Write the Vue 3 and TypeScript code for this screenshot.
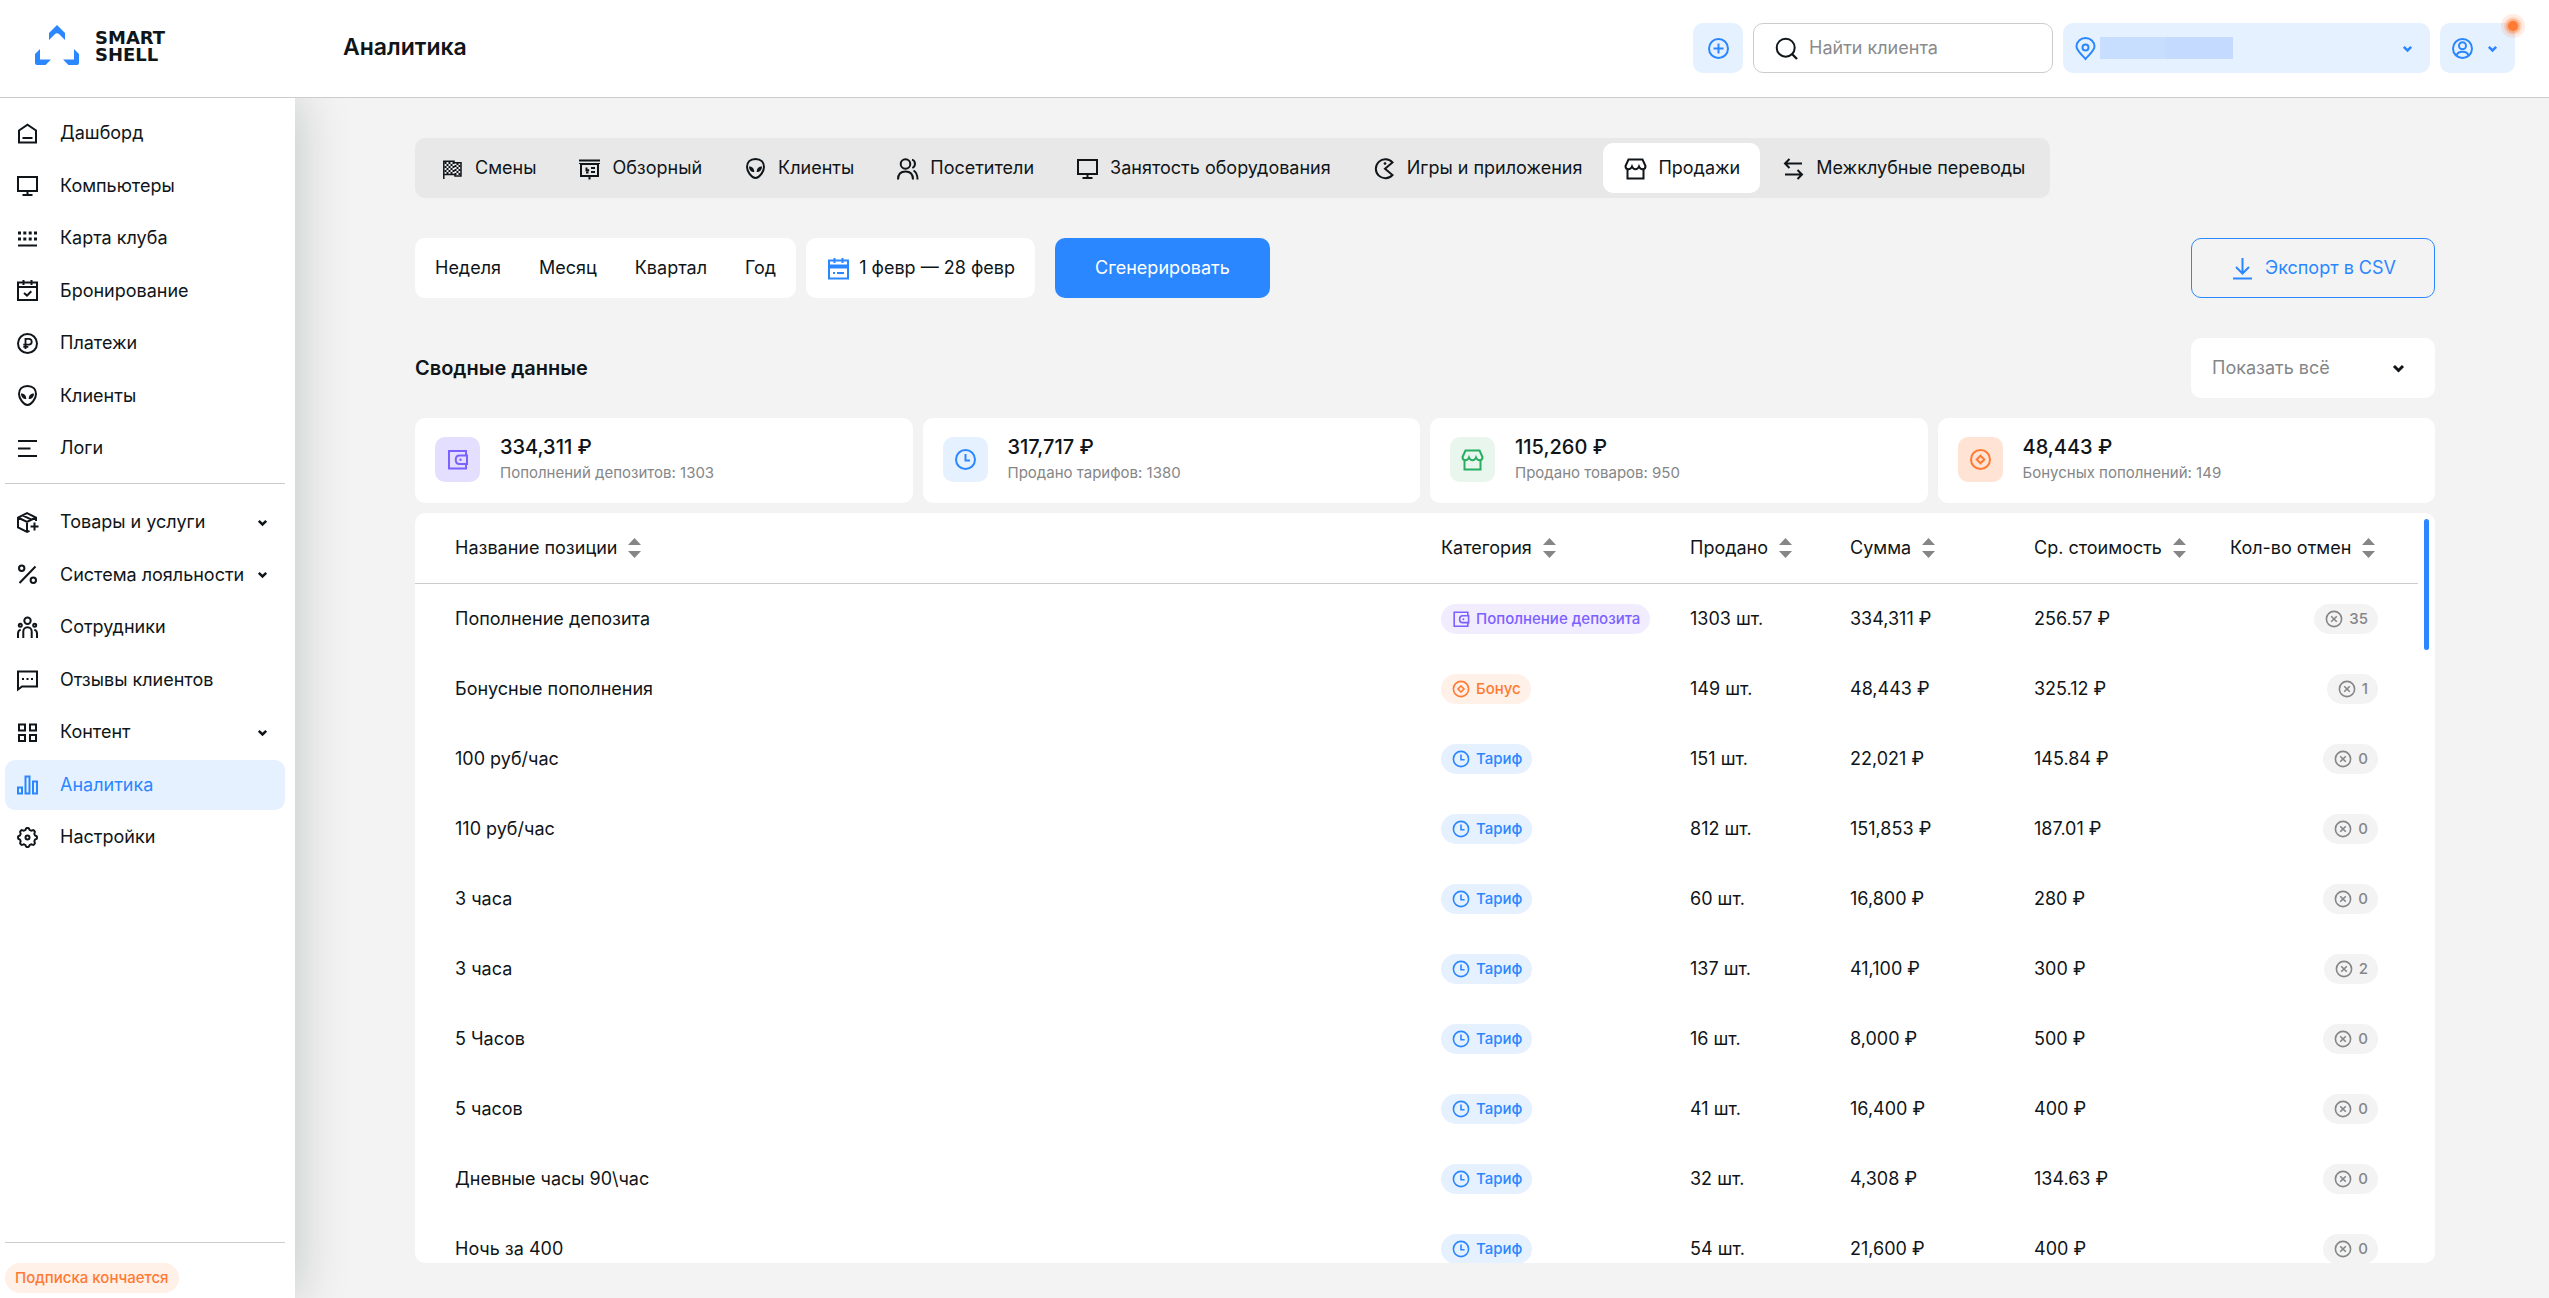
<script setup lang="ts">
import { ref } from 'vue'

type Tone = 'violet' | 'orange' | 'blue' | 'green'

interface NavItem {
  label: string
  icon: string
  expandable?: boolean
  active?: boolean
}

interface SaleRow {
  name: string
  category: string
  sold: string
  sum: string
  average: string
  cancels: number
}

// Outline of the settings gear: eight soft teeth around the centre.
function gearOutline(): string {
  const points: string[] = []
  for (let i = 0; i < 96; i++) {
    const angle = (i / 96) * Math.PI * 2
    const radius = 8.6 + 0.9 * Math.tanh(2 * Math.cos(8 * angle))
    points.push(`${(12.5 + radius * Math.cos(angle)).toFixed(2)} ${(12.5 + radius * Math.sin(angle)).toFixed(2)}`)
  }
  return `M${points.join('L')}Z`
}

// Checkered cells of the race flag.
function flagCells(): string {
  let d = ''
  for (let row = 0; row < 6; row++) {
    for (let col = 0; col < 8; col++) {
      if ((row + col) % 2 === 0) {
        const shift = col > 4 ? 1 : 0
        d += `M${4.5 + col * 2} ${6 + shift + row * 2}h2v2h-2z`
      }
    }
  }
  return d
}

const icons: Record<string, string> = {
  home: '<path d="M4 9.5 12.5 3.7 21 9.5v12H4zM7.5 17h10"/>',
  monitor: '<path d="M3 4h19v14H3zM12.5 18v4M7.5 22h10"/>',
  map: '<path d="M3 19.5h19"/><path fill="currentColor" stroke="none" d="M3 5.5h3v3H3zM8.3 5.5h3v3h-3zM13.7 5.5h3v3h-3zM19 5.5h3v3h-3zM3 11.5h3v3H3zM8.3 11.5h3v3h-3zM13.7 11.5h3v3h-3zM19 11.5h3v3h-3z"/>',
  booking: '<path d="M3 4.5h19v17.5H3zM3 9h19M8.5 2v5M16.500 2v5M9 15l3 2.600 4.300-4.300"/>',
  ruble: '<circle cx="12.500" cy="12.500" r="9.500"/><path stroke-width="1.800" d="M10.500 18V7.800h3.300a2.900 2.900 0 0 1 0 5.800H8.300M8.300 15.800h5"/>',
  alien: '<path d="M12.500 3C7 3 4 6.500 4 11c0 4.500 4.500 11 8.500 11S21 15.500 21 11c0-4.500-3-8-8.500-8z"/><path fill="currentColor" stroke="none" d="M6 10.500c3 0 5.300 1.700 5.300 5.500C8 16 6 14 6 10.500zM19 10.500c-3 0-5.300 1.700-5.300 5.500 3.300 0 5.300-2 5.300-5.500z"/>',
  logs: '<path d="M3 5h19M3 12.500h12.500M3 20h19"/>',
  box: '<path d="M21 11V7.500L12 3 3 7.500v10L12 22l2.500-1.200M3 7.500l9 4.500 9-4.500M12 12v10M7.500 5.300l9 4.400M19.500 12.500v8M15.500 16.500h8"/>',
  percent: '<circle cx="6.700" cy="6.300" r="2.700"/><circle cx="18.300" cy="18.300" r="2.700"/><path d="M4.500 21 20.500 4.500"/>',
  staff: '<circle cx="12.500" cy="5.800" r="3.200"/><circle cx="5.300" cy="10.300" r="1.500"/><circle cx="19.700" cy="10.300" r="1.500"/><path d="M8.300 23v-6.500a4.200 4.200 0 0 1 8.400 0V23M3 23v-4.500c0-2 .8-3.300 2.700-3.900M22 23v-4.500c0-2-.8-3.300-2.700-3.900"/>',
  chat: '<path d="M3 4.500h19v15H7L3 22.500z"/><path stroke-dasharray="2 2.500" d="M7 12h12"/>',
  grid: '<path d="M4 4.500h6v6H4zM15 4.500h6v6h-6zM4 15h6v6H4zM15 15h6v6h-6z"/>',
  chart: '<path d="M3 15.500h4v6H3zM10.500 4.500h4v17h-4zM18 9.500h4v12h-4z"/>',
  gear: `<path d="${gearOutline()}"/><circle cx="12.500" cy="12.500" r="2"/>`,
  flag: `<path stroke-width="1.500" d="M3.800 23V5.300H14v1.500h7V20h-6v-1.500H4"/><path fill="currentColor" stroke="none" d="${flagCells()}"/>`,
  board: '<path d="M2 4.500h21M4 8v12h17V8zM12.500 20v3.500M9.500 11.500v2.700h2.700M14 12h4M14 16h4M9 16.500h2.500"/><path d="M2 7.500h21" stroke-width="1"/>',
  users: '<circle cx="10.500" cy="8" r="4.800"/><path d="M3 23.500c0-5 2.800-8 7.500-8s7.500 3 7.500 8M17 3.600c3.800 1 4 7 .3 8.300M18.500 14.500c2.700 1.500 4 4.500 4 9"/>',
  pacman: '<path d="M20.500 6.500A9.500 9.500 0 1 0 20.500 19L13 12.700z"/><circle cx="13" cy="7.500" r="1" fill="currentColor" stroke-width=".8"/>',
  store: '<path d="M5.500 3.500h14l3 6.500c0 2-1.300 3.300-3 3.300s-2.800-1-3.500-2.800c-.7 1.800-2 2.800-3.500 2.800S9.700 12.300 9 10.500c-.7 1.800-1.800 2.800-3.500 2.800s-3-1.300-3-3.300zM4.500 13.500v9h16v-9M3.500 22.500h18"/>',
  swap: '<path d="M21 7.500H4.500M8.500 3 4 7.500 8.500 12M4 18.500h16.500M16.500 14l4.500 4.500-4.500 4.500"/>',
  calendar: '<path d="M3 4.500h19v18H3zM3 9.500h19M3 11.500h19M8.500 2v5M16.500 2v5M7 17h2M11 17h7"/>',
  download: '<path d="M12.500 2v15M6 11l6.500 6.500L19 11M3 22.500h19"/>',
  wallet: '<path d="M21 8V4H4v17.500h17V18M22 8.500h-7.500c-5 0-5 8.500 0 8.500H22z"/><circle cx="15.500" cy="12.800" r="1.200" fill="currentColor" stroke="none"/>',
  clock: '<circle cx="12.500" cy="12.500" r="9.500"/><path d="M12.500 7v6.500H17"/>',
  coin: '<circle cx="12.500" cy="12.500" r="9.500"/><path d="m12.500 8.700 3.800 3.800-3.800 3.800-3.800-3.800z"/>',
  cancel: '<circle cx="12.500" cy="12.500" r="9.500"/><path d="m9 9 7 7M16 9l-7 7"/>',
  plus: '<circle cx="12.500" cy="12.500" r="9.500"/><path d="M12.500 7.500v10M7.500 12.500h10"/>',
  search: '<circle cx="11.700" cy="11.700" r="9"/><path stroke-width="2.300" d="m18 18 5 5"/>',
  pin: '<path d="M12.500 23C7 17 3.500 14 3.500 10.500a9 8.500 0 0 1 18 0C21.500 14 18 17 12.500 23z"/><circle cx="12.500" cy="11.500" r="3"/>',
  profile: '<circle cx="12.500" cy="12.500" r="9.500"/><circle cx="12.500" cy="9.700" r="3.500"/><path d="M6.500 19.500c1.500-5 10.500-5 12 0"/>',
  chevron: '<path stroke-width="2.500" d="m8.800 10.800 3.700 3.700 3.700-3.700"/>',
  chevronBold: '<path stroke-width="3" d="m8 10 4.500 4.500L17 10"/>',
}

const primaryNav: NavItem[] = [
  { label: 'Дашборд', icon: 'home' },
  { label: 'Компьютеры', icon: 'monitor' },
  { label: 'Карта клуба', icon: 'map' },
  { label: 'Бронирование', icon: 'booking' },
  { label: 'Платежи', icon: 'ruble' },
  { label: 'Клиенты', icon: 'alien' },
  { label: 'Логи', icon: 'logs' },
]

const secondaryNav: NavItem[] = [
  { label: 'Товары и услуги', icon: 'box', expandable: true },
  { label: 'Система лояльности', icon: 'percent', expandable: true },
  { label: 'Сотрудники', icon: 'staff' },
  { label: 'Отзывы клиентов', icon: 'chat' },
  { label: 'Контент', icon: 'grid', expandable: true },
  { label: 'Аналитика', icon: 'chart', active: true },
  { label: 'Настройки', icon: 'gear' },
]

const tabs = [
  { label: 'Смены', icon: 'flag' },
  { label: 'Обзорный', icon: 'board' },
  { label: 'Клиенты', icon: 'alien' },
  { label: 'Посетители', icon: 'users' },
  { label: 'Занятость оборудования', icon: 'monitor' },
  { label: 'Игры и приложения', icon: 'pacman' },
  { label: 'Продажи', icon: 'store' },
  { label: 'Межклубные переводы', icon: 'swap' },
]
const activeTab = ref('Продажи')

const periods = ['Неделя', 'Месяц', 'Квартал', 'Год']

const cards: { value: string; note: string; icon: string; tone: Tone }[] = [
  { value: '334,311 ₽', note: 'Пополнений депозитов: 1303', icon: 'wallet', tone: 'violet' },
  { value: '317,717 ₽', note: 'Продано тарифов: 1380', icon: 'clock', tone: 'blue' },
  { value: '115,260 ₽', note: 'Продано товаров: 950', icon: 'store', tone: 'green' },
  { value: '48,443 ₽', note: 'Бонусных пополнений: 149', icon: 'coin', tone: 'orange' },
]

const categories: Record<string, { icon: string; tone: Tone }> = {
  'Пополнение депозита': { icon: 'wallet', tone: 'violet' },
  'Бонус': { icon: 'coin', tone: 'orange' },
  'Тариф': { icon: 'clock', tone: 'blue' },
}

const columns = [
  { label: 'Название позиции', key: 'name' },
  { label: 'Категория', key: 'category' },
  { label: 'Продано', key: 'sold' },
  { label: 'Сумма', key: 'sum' },
  { label: 'Ср. стоимость', key: 'average' },
  { label: 'Кол-во отмен', key: 'cancels' },
]

const rows: SaleRow[] = [
  { name: 'Пополнение депозита', category: 'Пополнение депозита', sold: '1303 шт.', sum: '334,311 ₽', average: '256.57 ₽', cancels: 35 },
  { name: 'Бонусные пополнения', category: 'Бонус', sold: '149 шт.', sum: '48,443 ₽', average: '325.12 ₽', cancels: 1 },
  { name: '100 руб/час', category: 'Тариф', sold: '151 шт.', sum: '22,021 ₽', average: '145.84 ₽', cancels: 0 },
  { name: '110 руб/час', category: 'Тариф', sold: '812 шт.', sum: '151,853 ₽', average: '187.01 ₽', cancels: 0 },
  { name: '3 часа', category: 'Тариф', sold: '60 шт.', sum: '16,800 ₽', average: '280 ₽', cancels: 0 },
  { name: '3 часа', category: 'Тариф', sold: '137 шт.', sum: '41,100 ₽', average: '300 ₽', cancels: 2 },
  { name: '5 Часов', category: 'Тариф', sold: '16 шт.', sum: '8,000 ₽', average: '500 ₽', cancels: 0 },
  { name: '5 часов', category: 'Тариф', sold: '41 шт.', sum: '16,400 ₽', average: '400 ₽', cancels: 0 },
  { name: 'Дневные часы 90\\час', category: 'Тариф', sold: '32 шт.', sum: '4,308 ₽', average: '134.63 ₽', cancels: 0 },
  { name: 'Ночь за 400', category: 'Тариф', sold: '54 шт.', sum: '21,600 ₽', average: '400 ₽', cancels: 0 },
]
</script>

<template>
  <div class="app">
    <header class="header">
      <a class="logo" href="#" aria-label="Smart Shell">
        <svg class="logo-mark" viewBox="0 0 44 40" aria-hidden="true">
          <path d="M14 8 22 0l8 8v7l-6-6q-2-1.500-4 0l-6 6zM5 24v10.500h11L10.500 40H2q-2 0-2-2v-9zM39 24v10.500H28l5.500 5.500H42q2 0 2-2v-9z" />
        </svg>
        <span class="logo-text"><span>SMART</span><span>SHELL</span></span>
      </a>
      <h1 class="title">Аналитика</h1>
      <div class="tools">
        <button class="tool" type="button" aria-label="Добавить"><svg class="icon" viewBox="0 0 25 25" v-html="icons.plus" /></button>
        <label class="search">
          <svg class="icon" viewBox="0 0 25 25" v-html="icons.search" />
          <input type="search" placeholder="Найти клиента" aria-label="Найти клиента" />
        </label>
        <button class="tool club" type="button" aria-haspopup="listbox" aria-label="Клуб">
          <svg class="icon" viewBox="0 0 25 25" v-html="icons.pin" />
          <span class="club-name" />
          <svg class="icon" viewBox="0 0 25 25" v-html="icons.chevron" />
        </button>
        <button class="tool profile" type="button" aria-haspopup="menu" aria-label="Профиль">
          <svg class="icon" viewBox="0 0 25 25" v-html="icons.profile" />
          <svg class="icon" viewBox="0 0 25 25" v-html="icons.chevron" />
          <span class="dot" />
        </button>
      </div>
    </header>

    <div class="body">
      <aside class="sidebar">
        <nav>
          <template v-for="(group, index) in [primaryNav, secondaryNav]" :key="index">
            <hr v-if="index" />
            <ul>
              <li v-for="item in group" :key="item.label">
                <a href="#" class="nav-link" :class="{ active: item.active }">
                  <svg class="icon" viewBox="0 0 25 25" v-html="icons[item.icon]" />
                  <span class="nav-label">{{ item.label }}</span>
                  <svg v-if="item.expandable" class="icon" viewBox="0 0 25 25" v-html="icons.chevron" />
                </a>
              </li>
            </ul>
          </template>
        </nav>
        <div class="sidebar-foot">
          <a href="#" class="pill orange">Подписка кончается</a>
        </div>
      </aside>

      <main class="main">
        <div class="tabs" role="tablist">
          <button
            v-for="tab in tabs"
            :key="tab.label"
            type="button"
            role="tab"
            class="tab"
            :class="{ active: tab.label === activeTab }"
            :aria-selected="tab.label === activeTab"
            @click="activeTab = tab.label"
          >
            <svg class="icon" viewBox="0 0 25 25" v-html="icons[tab.icon]" />
            <span>{{ tab.label }}</span>
          </button>
        </div>

        <div class="controls">
          <div class="periods">
            <button v-for="period in periods" :key="period" type="button">{{ period }}</button>
          </div>
          <button class="date" type="button">
            <svg class="icon" viewBox="0 0 25 25" v-html="icons.calendar" />
            <span>1 февр — 28 февр</span>
          </button>
          <button class="generate" type="button">Сгенерировать</button>
          <button class="export" type="button">
            <svg class="icon" viewBox="0 0 25 25" v-html="icons.download" />
            <span>Экспорт в CSV</span>
          </button>
        </div>

        <div class="summary-head">
          <h2>Сводные данные</h2>
          <div class="filter">
            <select aria-label="Показать">
              <option>Показать всё</option>
            </select>
            <svg class="icon" viewBox="0 0 25 25" v-html="icons.chevronBold" />
          </div>
        </div>

        <section class="cards">
          <article v-for="card in cards" :key="card.note" class="card">
            <span class="tile" :class="card.tone"><svg class="icon" viewBox="0 0 25 25" v-html="icons[card.icon]" /></span>
            <div>
              <p class="card-value">{{ card.value }}</p>
              <p class="card-note">{{ card.note }}</p>
            </div>
          </article>
        </section>

        <section class="panel">
          <div class="scroller">
            <table>
              <colgroup>
                <col />
                <col class="col-category" />
                <col class="col-sold" />
                <col class="col-sum" />
                <col class="col-average" />
                <col class="col-cancels" />
              </colgroup>
              <thead>
                <tr>
                  <th v-for="column in columns" :key="column.key" scope="col">
                    <button class="sort" type="button">
                      <span>{{ column.label }}</span>
                      <svg class="arrows" viewBox="0 0 13 20" aria-hidden="true"><path d="M0 7 6.500 0 13 7zM0 13l6.500 7 6.500-7z" /></svg>
                    </button>
                  </th>
                </tr>
              </thead>
              <tbody>
                <tr v-for="(row, index) in rows" :key="index">
                  <td>{{ row.name }}</td>
                  <td>
                    <span class="pill" :class="categories[row.category].tone">
                      <svg class="icon small" viewBox="0 0 25 25" v-html="icons[categories[row.category].icon]" />
                      <span>{{ row.category }}</span>
                    </span>
                  </td>
                  <td>{{ row.sold }}</td>
                  <td>{{ row.sum }}</td>
                  <td>{{ row.average }}</td>
                  <td class="cancels">
                    <span class="pill grey">
                      <svg class="icon small" viewBox="0 0 25 25" v-html="icons.cancel" />
                      <span>{{ row.cancels }}</span>
                    </span>
                  </td>
                </tr>
              </tbody>
            </table>
          </div>
          <span class="scroll-thumb" />
        </section>
      </main>
    </div>
  </div>
</template>

<style>
body {
  background: #f3f3f3;
}
</style>

<style scoped>
.app {
  display: flex;
  flex-direction: column;
  height: 100vh;
  overflow: hidden;
  font-family: Inter, "Noto Sans", sans-serif;
  font-size: 18px;
  line-height: 24px;
  color: #0f1518;
}
.app *,
.app {
  box-sizing: border-box;
}
button,
input,
select {
  font: inherit;
  color: inherit;
  background: none;
  border: 0;
  padding: 0;
  cursor: pointer;
}
a {
  color: inherit;
  text-decoration: none;
}
h1,
h2,
p,
ul {
  margin: 0;
  padding: 0;
  list-style: none;
}
.icon {
  flex: none;
  display: block;
  width: 25px;
  height: 25px;
  fill: none;
  stroke: currentColor;
  stroke-width: 2;
}
.icon.small {
  width: 20px;
  height: 20px;
}

.header {
  position: relative;
  z-index: 2;
  flex: none;
  display: flex;
  align-items: center;
  height: 98px;
  padding: 0 34px 1px 35px;
  border-bottom: 1px solid #ccc;
  background: #fff;
}
.logo {
  display: flex;
  align-items: center;
  gap: 16px;
  width: 308px;
}
.logo-mark {
  width: 44px;
  height: 40px;
  margin-bottom: 6px;
  fill: #2b87ff;
}
.logo-text {
  display: flex;
  flex-direction: column;
  margin-bottom: 4px;
  font: 18px/17px "DejaVu Sans", sans-serif;
  font-weight: 700;
}
.title {
  margin-bottom: 2px;
  font-size: 23px;
  line-height: 30px;
  font-weight: 600;
}
.tools {
  display: flex;
  gap: 10px;
  margin-left: auto;
}
.tool {
  display: flex;
  align-items: center;
  justify-content: center;
  width: 50px;
  height: 50px;
  border-radius: 10px;
  background: #e6f1ff;
  color: #2b87ff;
}
.search {
  display: flex;
  align-items: center;
  gap: 10px;
  width: 300px;
  padding: 0 20px;
  border: 1px solid #ccc;
  border-radius: 10px;
}
.search input {
  flex: 1;
  min-width: 0;
  outline: none;
}
.search input::placeholder {
  color: #8a8b8d;
  opacity: 1;
}
.club {
  width: 367px;
  padding: 0 10px;
  gap: 2px;
}
.club-name {
  width: 133px;
  height: 22px;
  margin-right: auto;
  background: linear-gradient(90deg, #c8deff 50%, #c5daff 50%);
}
.profile {
  position: relative;
  width: 75px;
  gap: 5px;
}
.dot {
  position: absolute;
  top: -2px;
  right: -3px;
  width: 10px;
  height: 10px;
  border-radius: 50%;
  background: #ff7a33;
  box-shadow: 0 0 0 2px #ff7a3366, 0 0 0 4px #ff7a3333, 0 0 0 7px #ff7a3322;
}

.body {
  flex: 1;
  display: flex;
  min-height: 0;
}
.sidebar {
  position: relative;
  z-index: 1;
  flex: none;
  display: flex;
  flex-direction: column;
  justify-content: space-between;
  width: 295px;
  padding: 10px 10px 5px 5px;
  background: #fff;
  box-shadow: 0 0 50px rgba(10, 22, 18, 0.22);
}
.sidebar ul {
  display: flex;
  flex-direction: column;
  justify-content: space-between;
  min-height: 365px;
}
.sidebar hr {
  height: 1px;
  margin: 10px 0 13px;
  border: 0;
  background: #ccc;
}
.nav-link {
  display: flex;
  align-items: center;
  height: 50px;
  padding: 0 10px;
  border-radius: 10px;
}
.nav-label {
  flex: 1;
  padding-left: 20px;
  white-space: nowrap;
}
.nav-link.active {
  background: #e6f1ff;
  color: #2b87ff;
}
.sidebar-foot {
  padding-top: 20px;
  border-top: 1px solid #ccc;
}

.pill {
  display: inline-flex;
  align-items: center;
  gap: 5px;
  height: 30px;
  padding: 0 10px;
  border-radius: 15px;
  font-size: 15px;
  line-height: 20px;
  font-weight: 500;
  white-space: nowrap;
  vertical-align: middle;
}
.violet {
  background: #f1edff;
  color: #7b61ff;
}
.orange {
  background: #fff0e8;
  color: #ff7a33;
}
.blue {
  background: #e6f1ff;
  color: #2b87ff;
}
.green {
  background: #e8f6ee;
  color: #28ae60;
}
.grey {
  background: #f3f3f3;
  color: #858688;
}

.main {
  flex: 1;
  display: flex;
  flex-direction: column;
  min-width: 0;
  padding: 40px 114px 35px 120px;
  background: #f3f3f3;
}
.tabs {
  flex: none;
  align-self: flex-start;
  display: flex;
  gap: 1px;
  padding: 5px;
  border-radius: 10px;
  background: #e8e8e8;
}
.tab {
  display: flex;
  align-items: center;
  gap: 10px;
  height: 50px;
  padding: 0 20px;
  border-radius: 10px;
  white-space: nowrap;
}
.tab.active {
  background: #fff;
}
.controls {
  flex: none;
  display: flex;
  height: 60px;
  margin-top: 40px;
  white-space: nowrap;
}
.periods {
  display: flex;
  gap: 38px;
  padding: 0 20px;
  border-radius: 10px;
  background: #fff;
}
.date {
  display: flex;
  align-items: center;
  gap: 8px;
  margin: 0 20px 0 10px;
  padding: 0 20px;
  border-radius: 10px;
  background: #fff;
}
.date .icon {
  color: #2b87ff;
}
.generate {
  padding: 0 40px;
  border-radius: 10px;
  background: #2b87ff;
  color: #fff;
}
.export {
  display: flex;
  align-items: center;
  justify-content: center;
  gap: 10px;
  width: 244px;
  margin-left: auto;
  border: 1px solid #2b87ff;
  border-radius: 10px;
  color: #2b87ff;
}
.summary-head {
  flex: none;
  display: flex;
  align-items: center;
  justify-content: space-between;
  margin-top: 40px;
}
h2 {
  font-size: 20px;
  font-weight: 600;
}
.filter {
  display: flex;
  align-items: center;
  width: 244px;
  height: 60px;
  padding: 0 24px 0 21px;
  border-radius: 10px;
  background: #fff;
}
.filter select {
  flex: 1;
  appearance: none;
  outline: none;
  color: #858688;
}

.cards {
  flex: none;
  display: grid;
  grid-template-columns: repeat(4, 1fr);
  gap: 10px;
  margin: 20px 0 10px;
}
.card {
  display: flex;
  align-items: center;
  gap: 20px;
  height: 85px;
  padding: 0 20px 2px;
  border-radius: 10px;
  background: #fff;
}
.tile {
  display: flex;
  align-items: center;
  justify-content: center;
  width: 45px;
  height: 45px;
  border-radius: 10px;
}
.tile.violet {
  background: #e4deff;
}
.tile.orange {
  background: #ffe4d6;
}
.card-value {
  font-size: 20px;
  line-height: 25px;
  font-weight: 500;
}
.card-note {
  font-size: 15px;
  line-height: 25px;
  color: #858688;
}

.panel {
  position: relative;
  flex: 1;
  min-height: 0;
  padding-right: 17px;
  border-radius: 10px;
  background: #fff;
  overflow: hidden;
}
.scroller {
  height: 100%;
  overflow-y: auto;
  scrollbar-width: none;
}
.scroll-thumb {
  position: absolute;
  top: 6px;
  right: 6px;
  width: 5px;
  height: 131px;
  border-radius: 3px;
  background: #2b87ff;
}
table {
  width: 100%;
  border-spacing: 0;
  table-layout: fixed;
}
.col-category {
  width: 249px;
}
.col-sold {
  width: 160px;
}
.col-sum {
  width: 184px;
}
.col-average {
  width: 196px;
}
.col-cancels {
  width: 188px;
}
th {
  height: 71px;
  padding: 0;
  border-bottom: 1px solid #ccc;
  text-align: left;
  font-weight: 400;
}
td {
  height: 70px;
  padding: 0;
  white-space: nowrap;
}
th:first-child,
td:first-child {
  padding-left: 40px;
}
.cancels {
  padding-right: 40px;
  text-align: right;
}
.sort {
  display: flex;
  align-items: center;
  gap: 11px;
  white-space: nowrap;
}
.arrows {
  width: 13px;
  height: 20px;
  fill: #858688;
}
</style>
